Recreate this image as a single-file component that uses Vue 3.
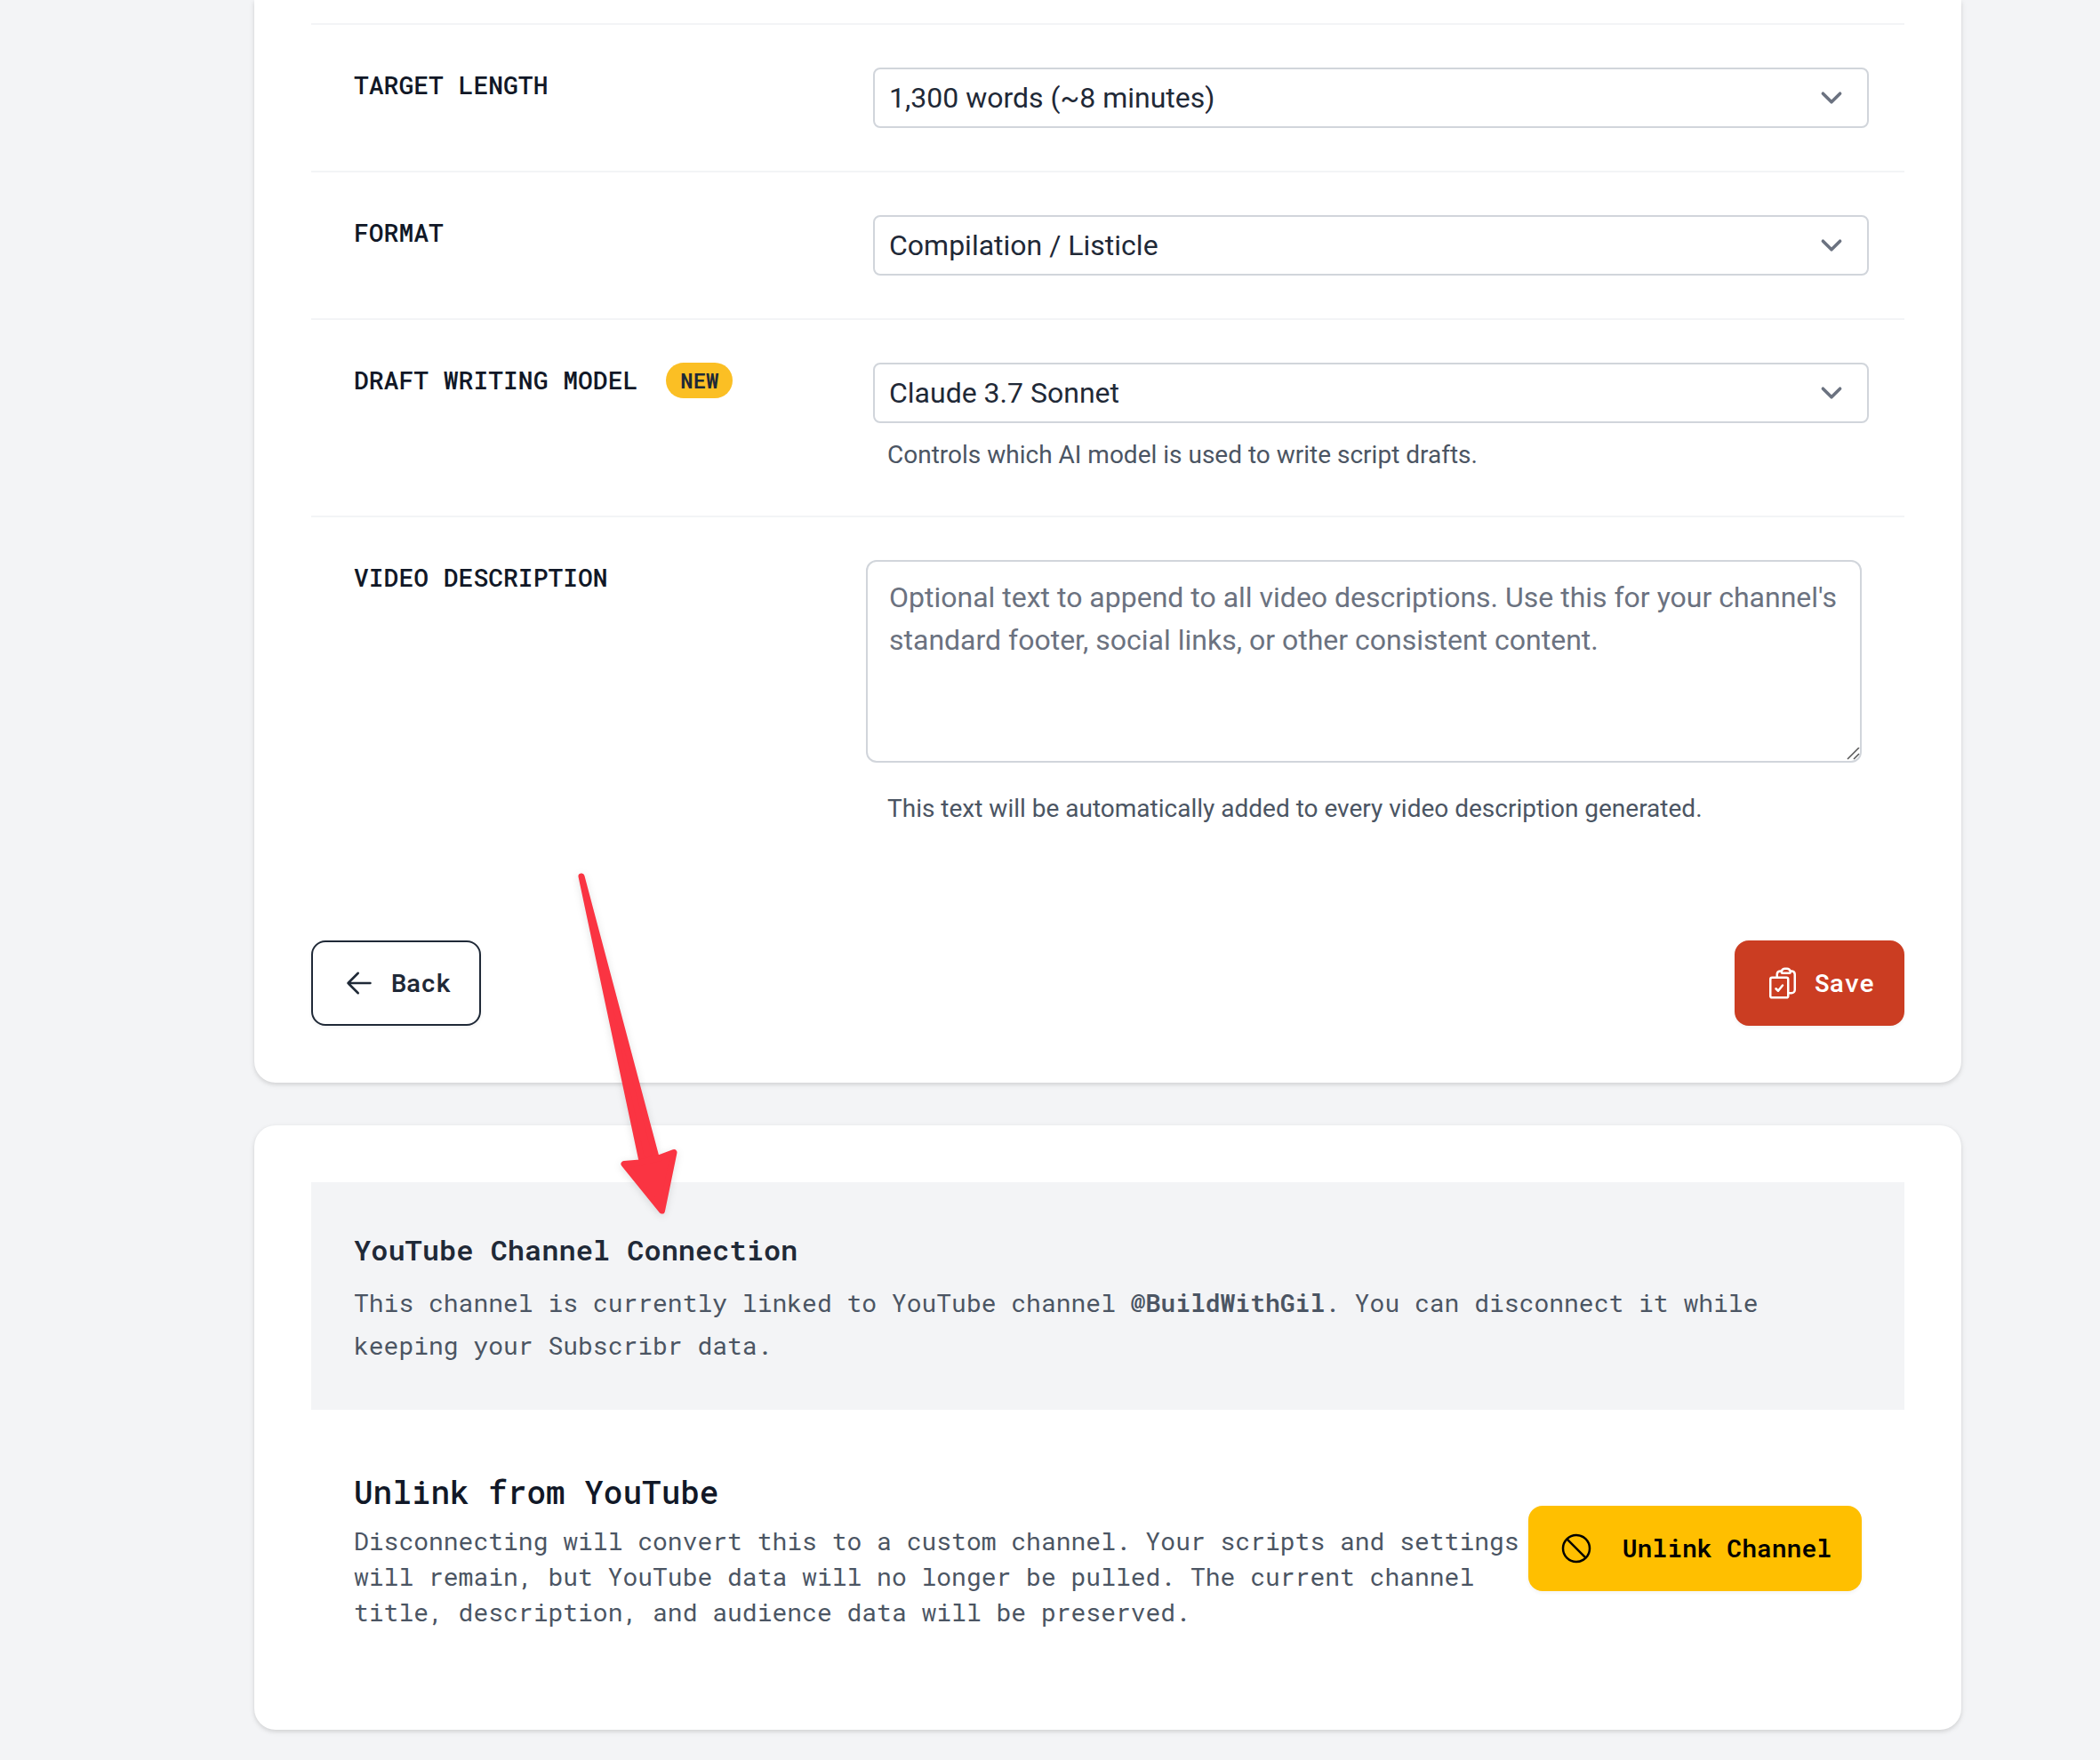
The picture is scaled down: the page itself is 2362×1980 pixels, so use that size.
<script setup>
import { ref } from 'vue'

const length = ref('1300')
const format = ref('listicle')
const model = ref('claude-3-7-sonnet')
const description = ref('')
</script>

<template>
  <main class="page">
    <form class="card" @submit.prevent>
      <div class="row">
        <div class="label-cell">
          <label class="label" for="length">TARGET LENGTH</label>
        </div>
        <div class="field">
          <div class="select-wrap">
            <select id="length" v-model="length" class="select">
              <option value="1300">1,300 words (~8 minutes)</option>
            </select>
            <svg class="chevron" viewBox="0 0 20 20" aria-hidden="true"><path d="M6 8l4 4 4-4" /></svg>
          </div>
        </div>
      </div>

      <div class="row">
        <div class="label-cell">
          <label class="label" for="format">FORMAT</label>
        </div>
        <div class="field">
          <div class="select-wrap">
            <select id="format" v-model="format" class="select">
              <option value="listicle">Compilation / Listicle</option>
            </select>
            <svg class="chevron" viewBox="0 0 20 20" aria-hidden="true"><path d="M6 8l4 4 4-4" /></svg>
          </div>
        </div>
      </div>

      <div class="row">
        <div class="label-cell">
          <label class="label" for="model">DRAFT WRITING MODEL</label>
          <span class="badge">NEW</span>
        </div>
        <div class="field">
          <div class="select-wrap">
            <select id="model" v-model="model" class="select" aria-describedby="model-help">
              <option value="claude-3-7-sonnet">Claude 3.7 Sonnet</option>
            </select>
            <svg class="chevron" viewBox="0 0 20 20" aria-hidden="true"><path d="M6 8l4 4 4-4" /></svg>
          </div>
          <p id="model-help" class="help">Controls which AI model is used to write script drafts.</p>
        </div>
      </div>

      <div class="row">
        <div class="label-cell">
          <label class="label" for="description">VIDEO DESCRIPTION</label>
        </div>
        <div class="field">
          <textarea
            id="description"
            v-model="description"
            class="textarea"
            rows="4"
            aria-describedby="description-help"
            placeholder="Optional text to append to all video descriptions. Use this for your channel's standard footer, social links, or other consistent content."
          ></textarea>
          <p id="description-help" class="help help-spaced">This text will be automatically added to every video description generated.</p>
        </div>
      </div>

      <div class="actions">
        <button type="button" class="btn btn-outline">
          <svg class="icon" viewBox="0 0 24 24" aria-hidden="true">
            <path d="M19.5 12h-15m0 0l6.75 6.75M4.5 12l6.75-6.75" />
          </svg>
          Back
        </button>
        <button type="submit" class="btn btn-primary">
          <svg class="icon" viewBox="0 0 24 24" aria-hidden="true">
            <path d="M11.35 3.836c-.065.21-.1.433-.1.664 0 .414.336.75.75.75h4.5a.75.75 0 0 0 .75-.75 2.25 2.25 0 0 0-.1-.664m-5.8 0A2.251 2.251 0 0 1 13.5 2.25H15c1.012 0 1.867.668 2.15 1.586m-5.8 0c-.376.023-.75.05-1.124.08C9.095 4.01 8.25 4.973 8.25 6.108V8.25m8.9-4.414c.376.023.75.05 1.124.08 1.131.094 1.976 1.057 1.976 2.192V16.5A2.25 2.25 0 0 1 18 18.75h-2.25m-7.5-10.5H4.875c-.621 0-1.125.504-1.125 1.125v11.25c0 .621.504 1.125 1.125 1.125h9.75c.621 0 1.125-.504 1.125-1.125V18.75m-7.5-10.5h6.375c.621 0 1.125.504 1.125 1.125v9.375m-8.25-3 1.5 1.5 3-3.75" />
          </svg>
          Save
        </button>
      </div>
    </form>

    <section class="card">
      <header class="notice">
        <h2 class="notice-title">YouTube Channel Connection</h2>
        <p class="notice-text">
          This channel is currently linked to YouTube channel <strong>@BuildWithGil</strong>. You can disconnect it while keeping your Subscribr data.
        </p>
      </header>
      <div class="unlink">
        <div class="unlink-copy">
          <h3 class="unlink-title">Unlink from YouTube</h3>
          <p class="unlink-text">
            Disconnecting will convert this to a custom channel. Your scripts and settings will remain, but YouTube data will no longer be pulled. The current channel title, description, and audience data will be preserved.
          </p>
        </div>
        <button type="button" class="btn btn-warning">
          <svg class="icon" viewBox="0 0 24 24" aria-hidden="true">
            <path d="M18.364 18.364A9 9 0 0 0 5.636 5.636m12.728 12.728A9 9 0 0 1 5.636 5.636m12.728 12.728L5.636 5.636" />
          </svg>
          Unlink Channel
        </button>
      </div>
    </section>

    <svg class="pointer" viewBox="0 0 130 400" aria-hidden="true">
      <path d="M14 6 L98 322 L82 326 Z" />
      <path d="M62 329.5 L80 328 L102 322.5 L118 316.5 L104.5 382 Z" />
    </svg>
  </main>
</template>

<style>
body {
  margin: 0;
  background: #f3f4f6;
}
</style>

<style scoped>
.page {
  position: relative;
  box-sizing: border-box;
  min-height: 100vh;
  padding: 0 156px 32px 286px;
  display: flex;
  flex-direction: column;
  gap: 48px;
  background: #f3f4f6;
  color: #1f2937;
  font-family: Roboto, "Liberation Sans", sans-serif;
  font-size: 32px;
  line-height: 48px;
}

.card {
  padding: 64px;
  border-radius: 24px;
  background: #fff;
  box-shadow: 0 2px 6px rgba(0, 0, 0, 0.1), 0 2px 4px rgba(0, 0, 0, 0.06);
}

form.card {
  padding-top: 26px;
  border-top-left-radius: 0;
  border-top-right-radius: 0;
}

.row {
  display: grid;
  grid-template-columns: repeat(3, minmax(0, 1fr));
  column-gap: 32px;
  padding: 48px;
  border-top: 2px solid #f3f4f6;
}

.label-cell {
  display: flex;
  align-items: center;
  align-self: start;
  gap: 32px;
}

.label,
.badge,
.btn,
.notice,
.unlink {
  font-family: "Roboto Mono", "Liberation Mono", monospace;
}

.label {
  color: #111827;
  font-size: 28px;
  font-weight: 500;
  line-height: 40px;
  white-space: nowrap;
}

.badge {
  padding: 0 16px;
  border-radius: 20px;
  background: #fbbf24;
  font-size: 24px;
  font-weight: 600;
  line-height: 40px;
}

.field {
  grid-column: span 2;
}

.select-wrap {
  position: relative;
  margin: 0 -8px 0 8px;
}

.select {
  display: block;
  appearance: none;
  box-sizing: border-box;
  width: 100%;
  height: 68px;
  padding: 0 80px 0 16px;
  border: 2px solid #d1d5db;
  border-radius: 8px;
  background: #fff;
  color: inherit;
  font: inherit;
}

.chevron {
  position: absolute;
  top: 10px;
  right: 18px;
  width: 48px;
  height: 48px;
  pointer-events: none;
  fill: none;
  stroke: #6b7280;
  stroke-width: 1.5;
  stroke-linecap: round;
  stroke-linejoin: round;
}

.textarea {
  display: block;
  box-sizing: border-box;
  width: 100%;
  padding: 16px 24px;
  border: 2px solid #d1d5db;
  border-radius: 12px;
  background: #fff;
  color: inherit;
  font: inherit;
  resize: vertical;
}

.textarea::-webkit-resizer {
  background: url("data:image/svg+xml,%3Csvg xmlns='http://www.w3.org/2000/svg' viewBox='0 0 15 15'%3E%3Cpath d='M1 13L14 0M8 13l6-6' stroke='%23555' stroke-width='1.5'/%3E%3C/svg%3E") no-repeat center / 100% 100%;
}

.textarea::placeholder {
  color: #6b7280;
  opacity: 1;
}

.help {
  margin: 16px 0 0;
  padding-left: 24px;
  color: #4b5563;
  font-size: 28px;
  line-height: 40px;
}

.help-spaced {
  margin-top: 32px;
}

.actions {
  display: flex;
  justify-content: space-between;
  margin-top: 80px;
}

.btn {
  display: inline-flex;
  flex-shrink: 0;
  align-items: center;
  gap: 16px;
  box-sizing: border-box;
  height: 96px;
  padding: 0 32px;
  border: 2px solid transparent;
  border-radius: 16px;
  font-size: 28px;
  font-weight: 600;
  line-height: 40px;
  box-shadow: 0 2px 4px rgba(0, 0, 0, 0.05);
}

.icon {
  width: 40px;
  height: 40px;
  fill: none;
  stroke: currentColor;
  stroke-width: 1.5;
  stroke-linecap: round;
  stroke-linejoin: round;
}

.btn-outline {
  border-color: #1f2937;
  background: #fff;
  color: #1f2937;
}

.btn-primary {
  border-color: #cb3d22;
  background: #cb3d22;
  color: #fff;
}

.btn-warning {
  gap: 32px;
  border-color: #ffbf00;
  background: #ffbf00;
  color: #000;
}

.notice {
  padding: 48px;
  background: #f3f4f6;
}

.notice-title {
  margin: 0 0 8px;
  font-size: 32px;
  font-weight: 600;
  line-height: 56px;
}

.notice-text {
  margin: 0;
  color: #4b5563;
  font-size: 28px;
  line-height: 48px;
}

.notice-text strong {
  font-weight: 600;
}

.unlink {
  display: flex;
  align-items: center;
  justify-content: space-between;
  padding: 64px 48px 48px;
}

.unlink-title {
  margin: 0 0 8px;
  color: #111827;
  font-size: 36px;
  font-weight: 500;
  line-height: 56px;
}

.unlink-text {
  margin: 0;
  color: #4b5563;
  font-size: 28px;
  line-height: 40px;
}

.pointer {
  position: absolute;
  top: 980px;
  left: 640px;
  width: 130px;
  height: 400px;
  overflow: visible;
  pointer-events: none;
  fill: #fa3442;
  stroke: #fa3442;
  stroke-width: 7;
  stroke-linejoin: round;
  filter: drop-shadow(0 2px 4px rgba(0, 0, 0, 0.12));
}
</style>
